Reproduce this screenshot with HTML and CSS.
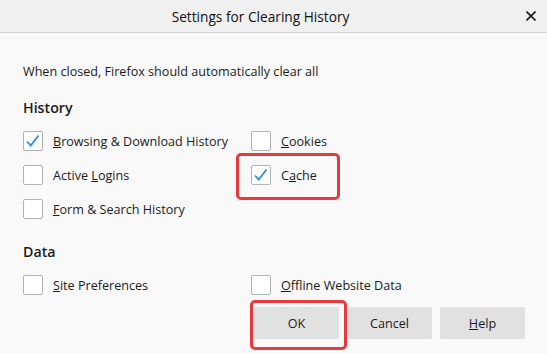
FILE: index.html
```html
<!DOCTYPE html>
<html>
<head>
<meta charset="utf-8">
<link rel="stylesheet" href="styles.css">
</head>
<body>
<div class="dialog">
  <header class="titlebar">
    <span class="title">Settings for Clearing History</span>
    <span class="close">
      <svg width="10" height="10" viewBox="0 0 10 10"><path d="M0.5 0.5 L9.5 9.5 M9.5 0.5 L0.5 9.5" stroke="#1a1a1a" stroke-width="1.6" fill="none"/></svg>
    </span>
  </header>
  <main class="content">
    <p class="intro">When closed, Firefox should automatically clear all</p>
    <h2 class="section">History</h2>
    <div class="grid">
      <label class="item"><span class="box checked"><svg width="20" height="20" viewBox="0 0 20 20"><path d="M4 10.5 L7.8 14.5 L15.5 4.5" stroke="#2b8ed6" stroke-width="1.8" fill="none"/></svg></span><span><u>B</u>rowsing &amp; Download History</span></label>
      <label class="item"><span class="box"></span><span><u>C</u>ookies</span></label>
      <label class="item"><span class="box"></span><span>Active <u>L</u>ogins</span></label>
      <label class="item"><span class="box checked"><svg width="20" height="20" viewBox="0 0 20 20"><path d="M4 10.5 L7.8 14.5 L15.5 4.5" stroke="#2b8ed6" stroke-width="1.8" fill="none"/></svg></span><span>C<u>a</u>che</span></label>
      <label class="item"><span class="box"></span><span><u>F</u>orm &amp; Search History</span></label>
    </div>
    <h2 class="section data">Data</h2>
    <div class="grid">
      <label class="item"><span class="box"></span><span><u>S</u>ite Preferences</span></label>
      <label class="item"><span class="box"></span><span><u>O</u>ffline Website Data</span></label>
    </div>
    <div class="buttons">
      <button class="btn">OK</button>
      <button class="btn">Cancel</button>
      <button class="btn"><u>H</u>elp</button>
    </div>
  </main>
  <div class="highlight hl-cache"></div>
  <div class="highlight hl-ok"></div>
</div>
</body>
</html>
```
FILE: styles.css
```css
html, body {
  margin: 0;
  padding: 0;
  width: 547px;
  height: 354px;
  overflow: hidden;
  background: #f9f9f9;
}
.dialog {
  position: relative;
  width: 547px;
  height: 354px;
  font-family: "Open Sans", "Noto Sans", sans-serif;
  color: #1b1b1b;
}
.titlebar {
  display: flex;
  align-items: center;
  height: 32px;
  background: #f0f0f0;
  border-bottom: 1px solid #d4d4d4;
}
.title {
  flex: 1;
  text-align: center;
  font-size: 13.7px;
  color: #111;
}
.close {
  width: 26px;
  display: flex;
  align-items: center;
}
.close svg { margin-left: 5px; }
.content {
  padding: 0 22px 0 23px;
}
.intro {
  margin: 0;
  padding-top: 31px;
  font-size: 12.6px;
  line-height: 16px;
}
.section {
  margin: 0;
  padding-top: 18px;
  font-size: 14.2px;
  font-weight: 600;
  line-height: 20px;
}
.section.data { padding-top: 16px; }
.grid {
  display: grid;
  grid-template-columns: 228px 1fr;
  grid-auto-rows: 34px;
  padding-top: 6px;
}
.item {
  display: flex;
  align-items: center;
  font-size: 12.6px;
}
.box {
  width: 18px;
  height: 18px;
  border: 1px solid #b3b3b3;
  border-radius: 2px;
  background: #fff;
  margin-right: 10px;
  position: relative;
  flex: none;
}
.box svg {
  position: absolute;
  left: -1px;
  top: -1px;
}
.buttons {
  display: flex;
  justify-content: flex-end;
  gap: 8px;
  padding-top: 5px;
}
.btn {
  width: 85px;
  height: 32px;
  border: none;
  border-radius: 2px;
  background: #e1e1e1;
  font-family: inherit;
  font-size: 12.6px;
  color: #1b1b1b;
  padding: 0;
}
.highlight {
  position: absolute;
  border: 3px solid #e8393c;
  border-radius: 5px;
  box-sizing: border-box;
}
.hl-cache {
  left: 236px;
  top: 153px;
  width: 104px;
  height: 47px;
}
.hl-ok {
  left: 250px;
  top: 300px;
  width: 97px;
  height: 50px;
}
```
